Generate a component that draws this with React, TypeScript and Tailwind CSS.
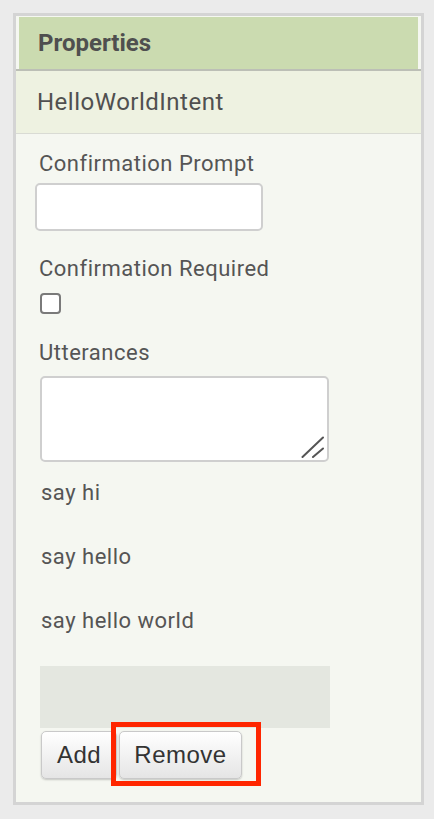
export default function App() {
  return (
    <div className="min-h-screen w-[434px] bg-[#ebebeb] pl-[13px] pt-[13px] pb-[14px] font-['Roboto',sans-serif]">
      <div className="flex h-[792px] w-[411px] flex-col border-[3px] border-[#d4d4d4] bg-[#f5f7f1]">
        <div className="mx-[3px] mt-px flex h-[52px] shrink-0 items-center bg-[#cbdbb0] pl-[19px] text-[24px] font-bold text-[#4f4f4f]">
          Properties
        </div>
        <div className="h-[2px] shrink-0 bg-[#bcbfb6]"></div>
        <div className="flex h-[63px] shrink-0 items-center border-b border-[#d9dbd4] bg-[#eef2e1] pl-[21px] text-[24px] tracking-[0.5px] text-[#505050]">
          HelloWorldIntent
        </div>

        <div className="flex flex-col pl-[23px] pt-[17px] text-[22px] leading-[26px] tracking-[0.5px] text-[#555]">
          <div>Confirmation Prompt</div>
          <input
            type="text"
            className="-ml-[4px] mt-[6px] h-[48px] w-[228px] rounded-[5px] border-2 border-[#cfcfcf] bg-white outline-none"
          />

          <div className="mt-[25px]">Confirmation Required</div>
          <input
            type="checkbox"
            className="ml-[1px] mt-[11px] h-[21px] w-[21px] appearance-none rounded-[4px] border-2 border-[#7a7a7a] bg-white"
          />

          <div className="mt-[26px]">Utterances</div>
          <div className="relative ml-[1px] mt-[10px] h-[86px] w-[289px]">
            <textarea className="h-full w-full resize-none rounded-[5px] border-2 border-[#cfcfcf] bg-white outline-none"></textarea>
            <svg className="absolute left-[260px] top-[59px] h-[24px] w-[24px]" viewBox="0 0 24 24" fill="none">
              <path d="M2.5 22 L23 2.5" stroke="#555" strokeWidth="2" strokeLinecap="round" />
              <path d="M13 22 L23 13.5" stroke="#555" strokeWidth="2" strokeLinecap="round" />
            </svg>
          </div>

          <div className="ml-[2px] mt-[18px] flex flex-col gap-[38px]">
            <div>say hi</div>
            <div>say hello</div>
            <div>say hello world</div>
          </div>

          <div className="ml-px mt-[32px] h-[62px] w-[290px] bg-[#e4e7e0]"></div>

          <div className="relative ml-[2px] mt-[3px] flex gap-[2px] font-['Liberation_Sans',sans-serif] text-[24px] tracking-[0.5px] text-[#333]">
            <button className="h-[48px] w-[76px] rounded-[5px] border border-[#c9c9c9] bg-gradient-to-b from-white to-[#e5e5e5] shadow-[0_1px_2px_rgba(0,0,0,0.2)]">
              Add
            </button>
            <button className="h-[48px] w-[123px] rounded-[5px] border border-[#c9c9c9] bg-gradient-to-b from-white to-[#e5e5e5] shadow-[0_1px_2px_rgba(0,0,0,0.2)]">
              Remove
            </button>
            <div className="absolute left-[70px] top-[-9px] h-[64px] w-[150px] border-[5px] border-[#ff2600]"></div>
          </div>
        </div>
      </div>
    </div>
  );
}
